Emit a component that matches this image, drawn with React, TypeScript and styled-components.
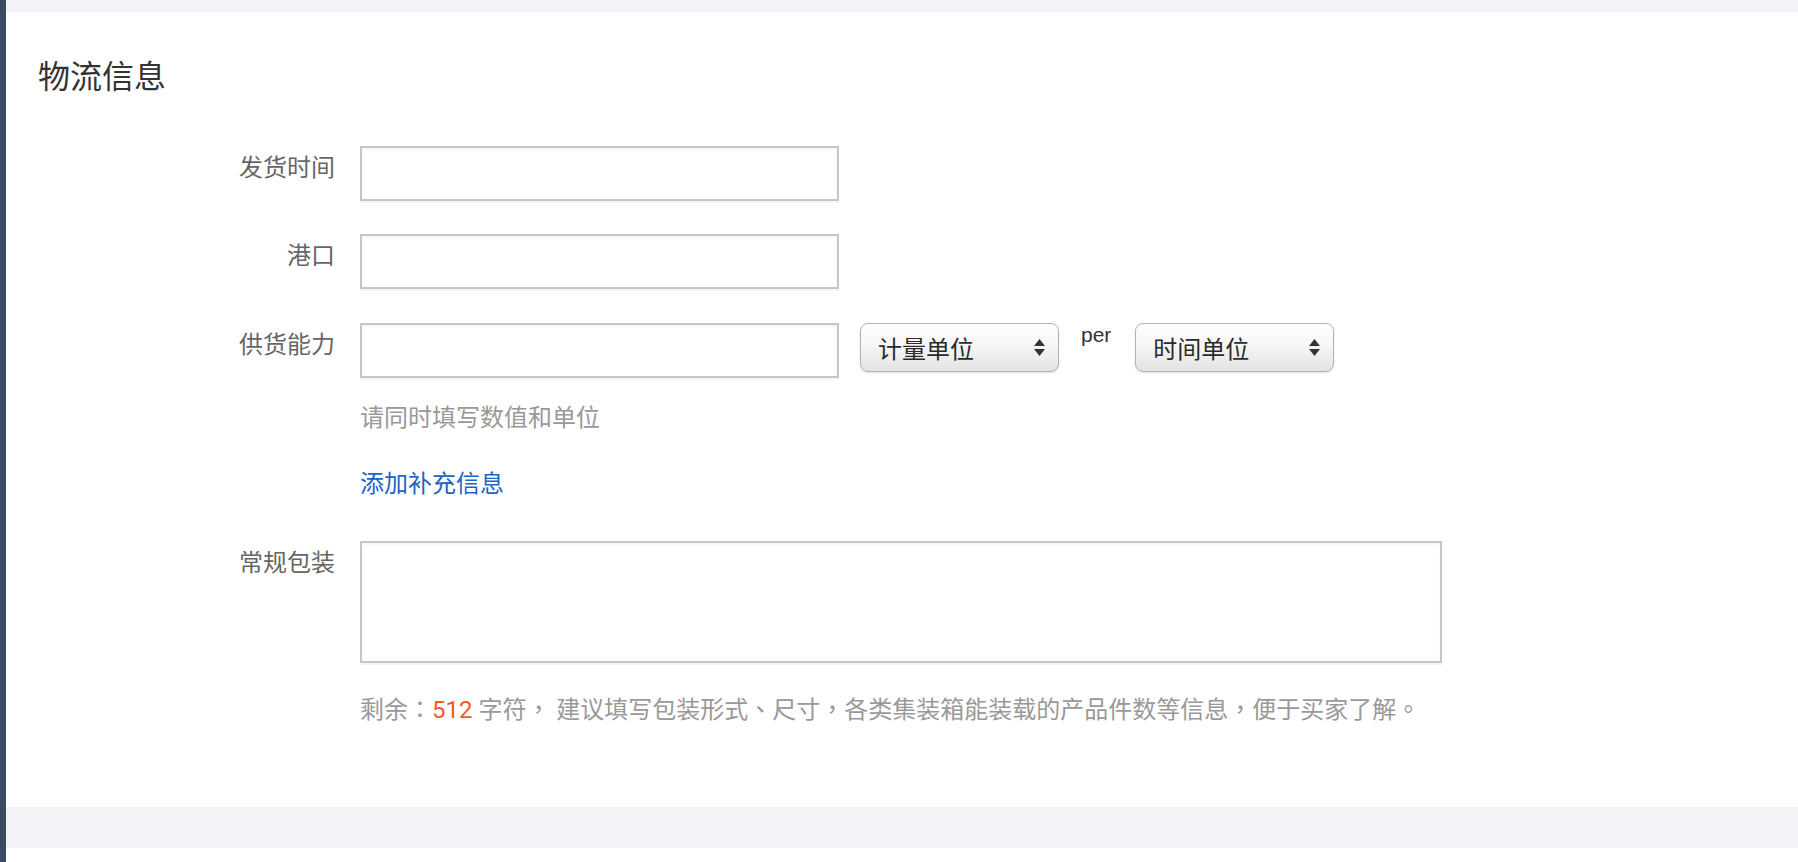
import React from 'react';
import styled, { createGlobalStyle } from 'styled-components';

const GlobalStyle = createGlobalStyle`
  html, body {
    margin: 0;
    padding: 0;
    height: 862px;
    overflow: hidden;
    background: #ffffff;
  }
  body {
    font-family: Roboto, "Noto Sans CJK SC", sans-serif;
  }
  * {
    box-sizing: border-box;
  }
`;

const Page = styled.div`
  display: flex;
  height: 862px;
`;

const SideEdge = styled.div`
  width: 6px;
  flex-shrink: 0;
  background-color: #3b4a5e;
`;

const Main = styled.div`
  flex: 1;
  display: flex;
  flex-direction: column;
  padding-top: 12px;
  background-color: #f2f3f6;
`;

const Card = styled.section`
  background-color: #ffffff;
  padding: 45px 0 81px 32px;
  margin-bottom: 41px;
`;

const NextCard = styled.section`
  flex: 1;
  background-color: #ffffff;
`;

const Title = styled.h2`
  margin: 0;
  font-size: 32px;
  line-height: 40px;
  font-weight: 400;
  color: #333333;
`;

const Form = styled.div`
  display: flex;
  flex-direction: column;
  padding-left: 117px;
  margin-top: 49px;
`;

const Row = styled.div<{ $gap?: number }>`
  display: grid;
  grid-template-columns: 180px 1fr;
  column-gap: 25px;
  margin-bottom: ${(p) => p.$gap ?? 0}px;
`;

const Label = styled.label`
  text-align: right;
  font-size: 24px;
  line-height: 45px;
  color: #666666;
`;

const Field = styled.div`
  display: flex;
  align-items: flex-start;
`;

const UnitGroup = styled.div`
  display: flex;
  align-items: flex-start;
  margin-left: 21px;
`;

const TextInput = styled.input`
  width: 479px;
  height: 55px;
  border: 2px solid #c6c6c6;
  box-shadow: inset 0 2px 3px rgba(0, 0, 0, 0.04), 0 2px 0 #f5f5f5;
  padding: 0 12px;
  font-size: 24px;
  font-family: inherit;
  color: #333;
  background: #fff;
  outline: none;
`;

const TextArea = styled.textarea`
  width: 1082px;
  height: 122px;
  border: 2px solid #c6c6c6;
  box-shadow: inset 0 2px 3px rgba(0, 0, 0, 0.04), 0 2px 0 #f5f5f5;
  padding: 10px 12px;
  font-size: 24px;
  font-family: inherit;
  resize: none;
  outline: none;
`;

const SelectWrap = styled.div`
  position: relative;
  width: 199px;
  height: 49px;
`;

const Select = styled.select`
  appearance: none;
  width: 100%;
  height: 100%;
  border: 1px solid #b3b3b3;
  border-radius: 8px;
  background: linear-gradient(#ffffff 0%, #f6f6f6 45%, #e3e3e3 100%);
  box-shadow: 0 1px 2px rgba(0, 0, 0, 0.12);
  padding: 0 34px 0 17px;
  font-size: 24px;
  font-family: "Noto Sans CJK SC", sans-serif;
  color: #2a2a2a;
  outline: none;
`;

const SelectArrow = styled.svg`
  position: absolute;
  right: 14px;
  top: 16px;
  pointer-events: none;
`;

const Per = styled.span`
  margin: 0 24px 0 22px;
  font-family: "Liberation Sans", Arial, sans-serif;
  font-size: 21px;
  line-height: 24px;
  color: #333333;
`;

const Hint = styled.div`
  font-size: 24px;
  line-height: 32px;
  color: #999999;
`;

const Note = styled(Hint)`
  font-family: Roboto, "Noto Sans CJK TC", sans-serif;
`;

const AddLink = styled.a`
  font-size: 24px;
  line-height: 32px;
  color: #1f64c4;
  text-decoration: none;
  cursor: pointer;
`;

const Count = styled.span`
  color: #ef5b25;
  font-family: Roboto, sans-serif;
`;

interface UnitSelectProps {
  placeholder: string;
}

const UnitSelect: React.FC<UnitSelectProps> = ({ placeholder }) => (
  <SelectWrap>
    <Select defaultValue="">
      <option value="">{placeholder}</option>
    </Select>
    <SelectArrow width="11" height="17" viewBox="0 0 11 17">
      <polygon points="0,7 5.5,0 11,7" fill="#333" />
      <polygon points="0,10 11,10 5.5,17" fill="#333" />
    </SelectArrow>
  </SelectWrap>
);

const App: React.FC = () => (
  <>
    <GlobalStyle />
    <Page>
      <SideEdge />
      <Main>
        <Card>
          <Title>物流信息</Title>
          <Form>
            <Row $gap={33}>
              <Label>发货时间</Label>
              <Field>
                <TextInput />
              </Field>
            </Row>
            <Row $gap={34}>
              <Label>港口</Label>
              <Field>
                <TextInput />
              </Field>
            </Row>
            <Row $gap={24}>
              <Label>供货能力</Label>
              <Field>
                <TextInput />
                <UnitGroup>
                  <UnitSelect placeholder="计量单位" />
                  <Per>per</Per>
                  <UnitSelect placeholder="时间单位" />
                </UnitGroup>
              </Field>
            </Row>
            <Row $gap={34}>
              <span />
              <Hint>请同时填写数值和单位</Hint>
            </Row>
            <Row $gap={41}>
              <span />
              <div>
                <AddLink>添加补充信息</AddLink>
              </div>
            </Row>
            <Row $gap={31}>
              <Label>常规包装</Label>
              <Field>
                <TextArea />
              </Field>
            </Row>
            <Row>
              <span />
              <Note>
                剩余：<Count>512</Count> 字符， 建议填写包装形式、尺寸，各类集装箱能装载的产品件数等信息，便于买家了解。
              </Note>
            </Row>
          </Form>
        </Card>
        <NextCard />
      </Main>
    </Page>
  </>
);

export default App;
